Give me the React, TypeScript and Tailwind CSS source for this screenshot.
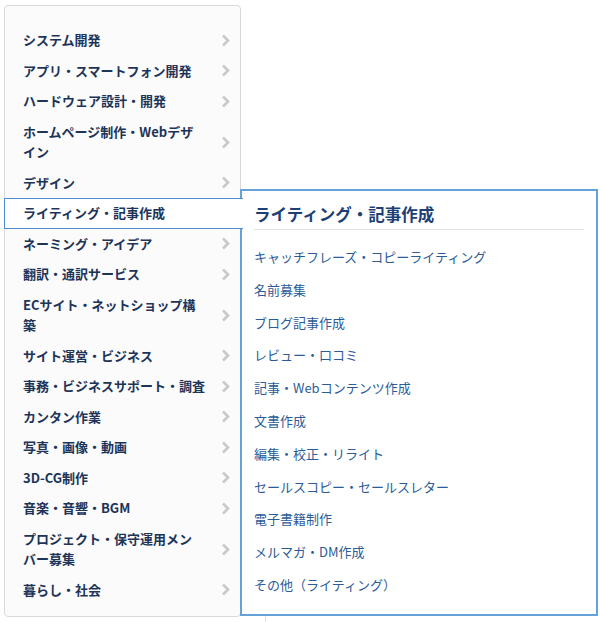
import React from 'react';

// lines are given as the reference wraps them
const categories: string[][] = [
  ['システム開発'],
  ['アプリ・スマートフォン開発'],
  ['ハードウェア設計・開発'],
  ['ホームページ制作・Webデザ', 'イン'],
  ['デザイン'],
  ['ライティング・記事作成'],
  ['ネーミング・アイデア'],
  ['翻訳・通訳サービス'],
  ['ECサイト・ネットショップ構', '築'],
  ['サイト運営・ビジネス'],
  ['事務・ビジネスサポート・調査'],
  ['カンタン作業'],
  ['写真・画像・動画'],
  ['3D-CG制作'],
  ['音楽・音響・BGM'],
  ['プロジェクト・保守運用メン', 'バー募集'],
  ['暮らし・社会'],
];

const writingLinks = [
  'キャッチフレーズ・コピーライティング',
  '名前募集',
  'ブログ記事作成',
  'レビュー・口コミ',
  '記事・Webコンテンツ作成',
  '文書作成',
  '編集・校正・リライト',
  'セールスコピー・セールスレター',
  '電子書籍制作',
  'メルマガ・DM作成',
  'その他（ライティング）',
];

const ACTIVE = 'ライティング・記事作成';

function Chevron() {
  return (
    <svg width="9" height="13" viewBox="0 0 9 13" className="shrink-0">
      <polyline points="2,1.5 7,6.5 2,11.5" fill="none" stroke="#c9c9c9" strokeWidth="2.6" />
    </svg>
  );
}

export default function App() {
  return (
    <div
      className="relative h-[622px] w-[600px] overflow-hidden bg-white pl-[4px] pt-[5px]"
      style={{ fontFamily: '"Noto Sans CJK JP", "Noto Sans", sans-serif' }}
    >
      {/* column border of the page behind the flyout */}
      <div className="absolute left-[265px] top-[500px] bottom-0 w-px bg-[#e2e2e2]" />

      <div className="relative w-[237px] rounded border border-[#d9d9d9] bg-[#fbfbfb] pt-[19px] pb-[11px]">
        {categories.map((lines) => {
          const key = lines.join('');
          if (key === ACTIVE) {
            return (
              <div
                key={key}
                className="relative z-20 -ml-px -mr-[3px] border-y border-l border-[#4a8fd0] bg-white py-[4px] pl-[18px] text-[13px] font-bold leading-[20.5px] text-[#1d3459]"
              >
                {key}
              </div>
            );
          }
          return (
            <div key={key} className="flex items-center justify-between py-[5px] pl-[18px] pr-[10px]">
              <span className="whitespace-nowrap text-[13px] font-bold leading-[20.5px] text-[#1d3459]">
                {lines.map((line, i) => (
                  <React.Fragment key={line}>
                    {i > 0 && <br />}
                    {line}
                  </React.Fragment>
                ))}
              </span>
              <Chevron />
            </div>
          );
        })}
      </div>

      <div className="absolute left-[240px] top-[189px] z-10 h-[427px] w-[358px] border-2 border-[#66a2da] bg-white px-[12px]">
        <h2 className="border-b border-[#e3e3e3] pt-[11px] pb-[3px] text-[16.5px] font-bold leading-[24px] text-[#1c3f75]">
          ライティング・記事作成
        </h2>
        <ul className="mt-[10.6px]">
          {writingLinks.map((link) => (
            <li key={link} className="flex h-[32.8px] items-center text-[13px] leading-[20px] text-[#2b5c98]">
              {link}
            </li>
          ))}
        </ul>
      </div>
    </div>
  );
}
